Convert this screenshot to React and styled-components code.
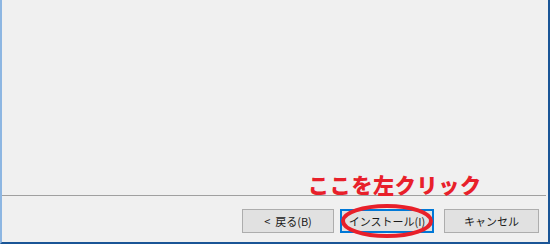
import React from "react";
import styled, { createGlobalStyle } from "styled-components";

const Global = createGlobalStyle`
  html, body { margin: 0; padding: 0; background: #f0f0f0; }
  body { font-family: "Noto Sans CJK JP", "Noto Sans", sans-serif; }
`;

const Window = styled.div`
  position: relative;
  width: 550px;
  height: 244px;
  box-sizing: border-box;
  background: #f0f0f0;
  border-left: 2px solid #8db6e2;
  border-right: 2px solid #1a5596;
  border-bottom: 2px solid #1a5596;
  display: flex;
  flex-direction: column;
`;

const Body = styled.div`
  height: 195px;
`;

const Separator = styled.div`
  height: 1px;
  background: #a0a0a0;
  margin-right: 2px;
`;

const Footer = styled.div`
  flex: 1;
  display: flex;
  justify-content: flex-end;
  align-items: flex-start;
  padding: 13px 9px 0 0;
  gap: 6px;
`;

const Button = styled.button`
  width: ${(p) => p.w || 93}px;
  height: 24px;
  box-sizing: border-box;
  margin-left: ${(p) => p.gap || 0}px;
  background: #e1e1e1;
  border: 1px solid ${(p) => (p.primary ? "#0078d7" : "#adadad")};
  box-shadow: ${(p) => (p.primary ? "inset 0 0 0 1px #0078d7" : "none")};
  font-family: "Noto Sans CJK JP", sans-serif;
  font-size: 11px;
  color: #1a1a1a;
  padding: 0;
  white-space: pre;
`;

const Note = styled.div`
  position: absolute;
  left: 306px;
  top: 170px;
  font-family: "Noto Sans CJK JP", sans-serif;
  font-weight: 900;
  font-size: 21px;
  letter-spacing: 0.7px;
  color: #e8202a;
  line-height: 28px;
`;

const Ring = styled.svg`
  position: absolute;
  left: 338px;
  top: 202px;
  pointer-events: none;
`;

export default function App() {
  return (
    <>
      <Global />
      <Window>
        <Body />
        <Separator />
        <Footer>
          <Button w={92}>{"<  戻る(B)"}</Button>
          <Button w={94} primary>インストール(I)</Button>
          <Button w={95} gap={4}>キャンセル</Button>
        </Footer>
        <Note>ここを左クリック</Note>
        <Ring width="96" height="38" viewBox="0 0 96 38">
          <ellipse cx="47" cy="19" rx="44" ry="15" fill="none" stroke="#e8202a" strokeWidth="4" />
        </Ring>
      </Window>
    </>
  );
}
